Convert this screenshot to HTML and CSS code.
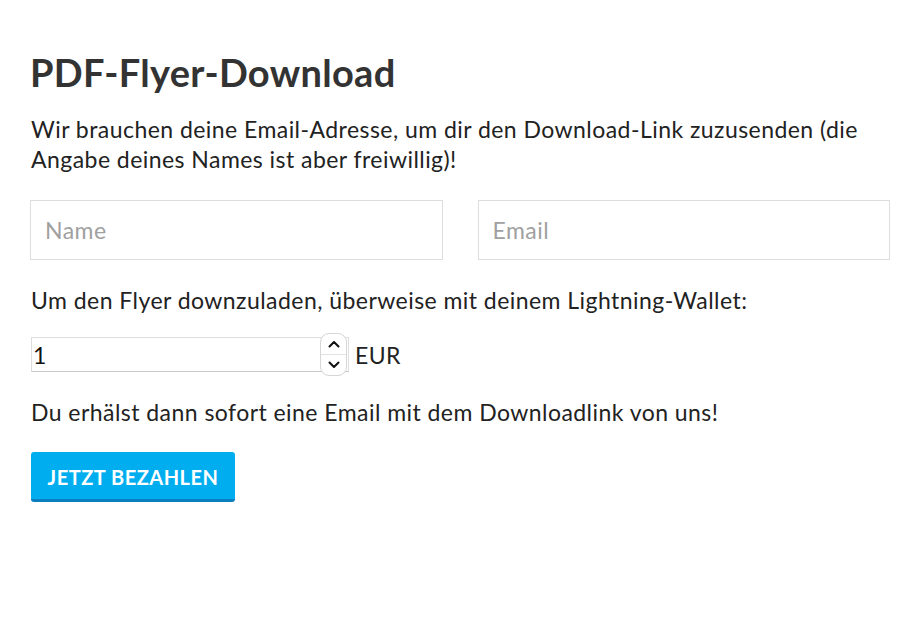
FILE: index.html
```html
<!DOCTYPE html>
<html lang="de">
<head>
<meta charset="utf-8">
<title>PDF-Flyer-Download</title>
<link rel="stylesheet" href="styles.css">
</head>
<body>
<main class="page">
  <h1 class="title">PDF-Flyer-Download</h1>
  <p class="intro">Wir brauchen deine Email-Adresse, um dir den Download-Link zuzusenden (die Angabe deines Names ist aber freiwillig)!</p>
  <div class="fields">
    <input class="field" type="text" placeholder="Name">
    <input class="field" type="email" placeholder="Email">
  </div>
  <p class="text pay-text">Um den Flyer downzuladen, überweise mit deinem Lightning-Wallet:</p>
  <div class="amount-row">
    <div class="number-box">
      <input class="number-input" type="text" value="1">
      <span class="stepper">
        <svg class="chev" width="12" height="8" viewBox="0 0 12 8"><path d="M1.5 6.5 L6 2 L10.5 6.5" fill="none" stroke="#111" stroke-width="2" stroke-linecap="round" stroke-linejoin="round"/></svg>
        <span class="stepper-line"></span>
        <svg class="chev" width="12" height="8" viewBox="0 0 12 8"><path d="M1.5 1.5 L6 6 L10.5 1.5" fill="none" stroke="#111" stroke-width="2" stroke-linecap="round" stroke-linejoin="round"/></svg>
      </span>
    </div>
    <span class="currency">EUR</span>
  </div>
  <p class="text info-text">Du erhälst dann sofort eine Email mit dem Downloadlink von uns!</p>
  <button class="pay-btn" type="button">JETZT BEZAHLEN</button>
</main>
</body>
</html>
```
FILE: styles.css
```css
html, body {
  margin: 0;
  padding: 0;
  background: #fff;
}
body {
  font-family: "Lato", "Open Sans", sans-serif;
  color: #222;
}
.page {
  padding: 48px 15px 0 30px;
  display: flex;
  flex-direction: column;
  align-items: flex-start;
}
.title {
  margin: 0;
  font-size: 38px;
  line-height: 48px;
  font-weight: 700;
  color: #333;
  letter-spacing: 0.3px;
}
.intro {
  margin: 18px 0 0 1px;
  font-size: 23px;
  line-height: 30px;
  letter-spacing: 0.45px;
  color: #222;
}
.fields {
  margin-top: 26px;
  align-self: stretch;
  display: grid;
  grid-template-columns: 1fr 1fr;
  column-gap: 35px;
}
.field {
  box-sizing: border-box;
  height: 60px;
  border: 1px solid #ddd;
  border-radius: 0;
  padding: 0 14px;
  font-family: inherit;
  font-size: 23px;
  letter-spacing: 0.45px;
  color: #222;
  outline: none;
  min-width: 0;
}
.field::placeholder {
  color: #a0a0a0;
}
.text {
  margin: 0 0 0 1px;
  font-size: 23px;
  line-height: 30px;
  letter-spacing: 0.45px;
  color: #222;
}
.pay-text {
  margin-top: 25px;
}
.amount-row {
  margin-top: 22px;
  display: flex;
  align-items: center;
  gap: 6px;
}
.number-box {
  position: relative;
  box-sizing: border-box;
  width: 318px;
  height: 35px;
  margin-left: 1px;
  border: 1px solid #ddd;
  border-bottom-color: #c8c8c8;
  display: flex;
  align-items: center;
}
.number-input {
  border: none;
  outline: none;
  padding: 0 1px;
  width: 270px;
  font-family: inherit;
  font-size: 23px;
  color: #111;
  background: transparent;
}
.stepper {
  position: absolute;
  right: 1px;
  top: -5px;
  box-sizing: border-box;
  width: 27px;
  height: 43px;
  border: 1px solid #d6d6d6;
  border-radius: 9px;
  background: #fff;
  display: flex;
  flex-direction: column;
  align-items: center;
  justify-content: center;
  gap: 6px;
}
.stepper-line {
  width: 25px;
  height: 1px;
  background: #e2e2e2;
}
.chev {
  display: block;
}
.currency {
  font-size: 23px;
  letter-spacing: 0.45px;
  color: #222;
}
.info-text {
  margin-top: 25px;
}
.pay-btn {
  margin-top: 25px;
  margin-left: 1px;
  width: 204px;
  height: 50px;
  box-sizing: border-box;
  border: none;
  border-bottom: 3px solid #0a7fc0;
  border-radius: 3px;
  background: #00aeef;
  color: #fff;
  font-family: inherit;
  font-size: 20px;
  font-weight: 700;
  letter-spacing: 0.5px;
  padding: 2px 0 0;
  cursor: pointer;
}
```
